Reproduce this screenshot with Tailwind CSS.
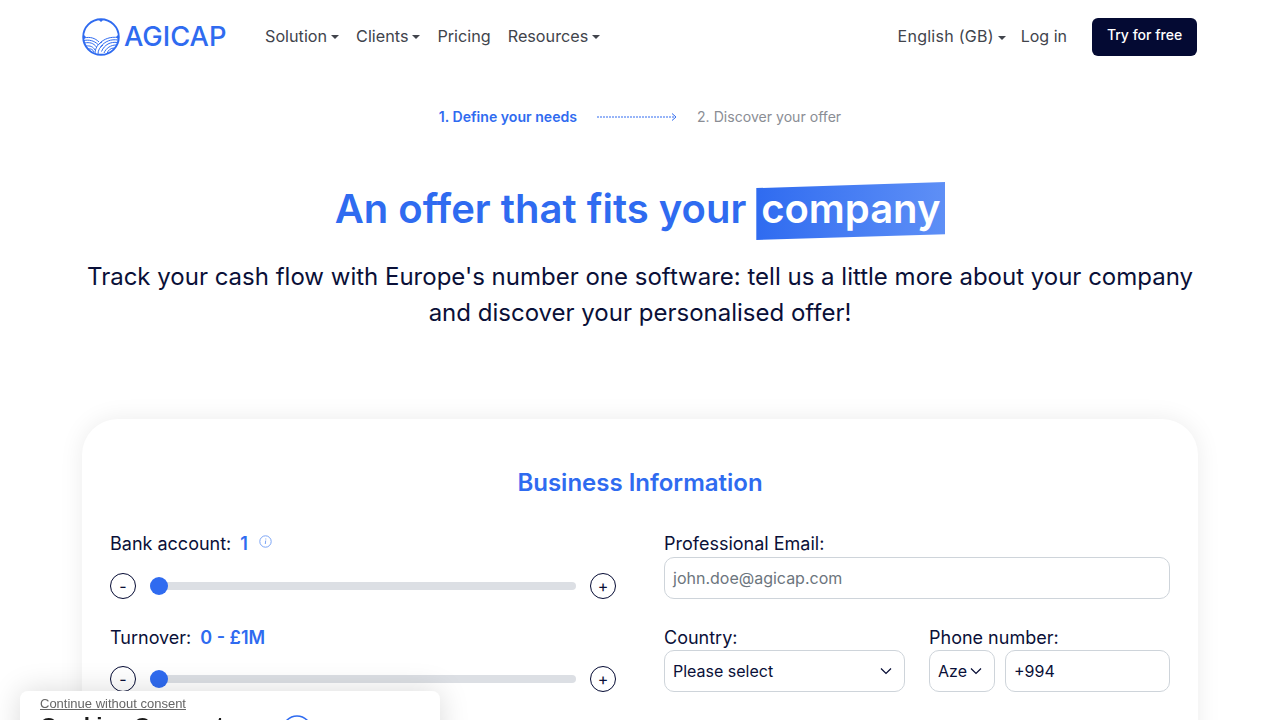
<!DOCTYPE html>
<html lang="en"><head><meta charset="utf-8"><title>Agicap</title>
<script src="https://cdn.jsdelivr.net/npm/@tailwindcss/browser@4"></script></head>
<body class="h-[720px] overflow-hidden bg-white font-['Inter',sans-serif] text-[#0a1038]">
<header class="flex h-[73px] items-center justify-between pl-[82px] pr-[83px]">
  <div class="flex items-center">
    <a class="flex w-[183px] items-center gap-[4px] text-[#2f6bf0]">
      <svg class="h-[38px] w-[38px]" viewBox="0 0 38 38" fill="none" stroke="#2f6bf0"><circle cx="19" cy="19" r="17.800" stroke-width="1.900"/><path fill="#2f6bf0" stroke="none" d="M16.500 1.500h5L19 4zM1.500 16.500v5L4 19zM36.500 16.500v5L34 19z"/><path stroke-width="1" d="M2 20c6-1.500 11 0 15 4M2 22.500c5-1 10 0 14 4M2.500 25c5-1 9 0 12 4M4 28c4-.5 7 .5 9 4M6 31c3-.5 5 .5 6 3M36 19.500c-7-1-14 1-19 6.500M36 22c-7-1-13 1-17.500 7M35.500 24.500c-7-1-13 2-16 9M34 27c-5 0-10 3-12 8M32 30c-3 0-6 2-7 5.500M13 36c0-6 3-10 7-12M16 36c0-4 2-7 5-9"/></svg>
      <span class="text-[27.300px] font-medium leading-none">AGICAP</span>
    </a>
    <nav class="flex items-center gap-[17px] pb-[1px] text-[16.200px] text-[#41444c]">
      <span class="flex items-center gap-[4px]">Solution<i class="mt-[3px] border-x-[4px] border-t-[4px] border-x-transparent border-t-[#41444c]"></i></span>
      <span class="flex items-center gap-[4px]">Clients<i class="mt-[3px] border-x-[4px] border-t-[4px] border-x-transparent border-t-[#41444c]"></i></span>
      <span>Pricing</span>
      <span class="flex items-center gap-[4px]">Resources<i class="mt-[3px] border-x-[4px] border-t-[4px] border-x-transparent border-t-[#41444c]"></i></span>
    </nav>
  </div>
  <div class="flex items-center text-[16px] text-[#41444c]">
    <span class="flex items-center gap-[4px] pb-[1px] tracking-[0.25px]">English (GB)<i class="mt-[3px] border-x-[4px] border-t-[4px] border-x-transparent border-t-[#41444c]"></i></span>
    <span class="ml-[15px] pb-[1px]">Log in</span>
    <a class="ml-[25px] flex h-[38px] w-[105px] items-center justify-center rounded-[6px] bg-[#040a33] pb-[4px] text-[14px] font-medium text-white">Try for free</a>
  </div>
</header>
<main>
  <div class="mt-[33px] flex h-[22px] items-center justify-center text-[14.100px]">
    <span class="font-semibold text-[#2f6bf0]">1. Define your needs</span>
    <svg class="mx-[20px] h-[10px] w-[80px]" viewBox="0 0 80 10" fill="none" stroke="#2f6bf0"><path stroke-dasharray="2 1" d="M0 5h78"/><path d="M75 1.500l4 3.500-4 3.500"/></svg>
    <span class="text-[#8a8d94]">2. Discover your offer</span>
  </div>
  <h1 class="mt-[51px] flex h-[60px] items-center justify-center text-[40px] font-semibold text-[#2f6bf0]">
    An offer that fits your
    <span class="relative mt-[4px] ml-[10px] inline-flex h-[58px] w-[189px] items-center justify-center pb-[4px]">
      <span class="absolute inset-0 bg-gradient-to-r from-[#2f6bf0] to-[#5e8ff6] [clip-path:polygon(0_10.500%,100%_0,100%_90%,0_100%)]"></span>
      <span class="relative text-white">company</span>
    </span>
  </h1>
  <p class="mx-auto mt-[20px] w-[1120px] text-center text-[24px] leading-[36px]">Track your cash flow with Europe's number one software: tell us a little more about your company and discover your personalised offer!</p>
  <section class="mx-[82px] mt-[88px] h-[400px] rounded-[36px] bg-white px-[28px] pt-[46px] shadow-[0_0_24px_rgba(0,0,0,0.08)]">
    <h2 class="text-center text-[24px] leading-[36px] font-semibold text-[#2f6bf0]">Business Information</h2>
    <div class="mt-[29px] grid grid-cols-[506px_506px] gap-x-[48px]">
      <div>
        <div class="flex h-[27px] items-center text-[18px]">Bank account:<b class="ml-[9px] font-semibold text-[#2f6bf0]">1</b>
          <svg class="mb-[4px] ml-[11px] h-[13px] w-[13px]" viewBox="0 0 13 13" fill="none" stroke="#7ba4f5"><circle cx="6.500" cy="6.500" r="5.700"/><path d="M6.700 5.500l-.4 3.500M6.800 3.500v1"/></svg>
        </div>
        <div class="mt-[16px] flex h-[26px] items-center">
          <span class="flex h-[26px] w-[26px] items-center justify-center rounded-full border border-[#040a33] text-[16px] leading-none">-</span>
          <div class="relative mx-[14px] h-[8px] w-[426px] rounded-full bg-[#dcdfe4]"><i class="absolute top-[-5px] left-0 h-[18px] w-[18px] rounded-full bg-[#2f6bf0]"></i></div>
          <span class="flex h-[26px] w-[26px] items-center justify-center rounded-full border border-[#040a33] text-[16px] leading-none">+</span>
        </div>
        <div class="mt-[25px] flex h-[27px] items-center text-[18px]">Turnover:<b class="ml-[9px] font-semibold text-[#2f6bf0]">0 - £1M</b></div>
        <div class="mt-[15px] flex h-[26px] items-center">
          <span class="flex h-[26px] w-[26px] items-center justify-center rounded-full border border-[#040a33] text-[16px] leading-none">-</span>
          <div class="relative mx-[14px] h-[8px] w-[426px] rounded-full bg-[#dcdfe4]"><i class="absolute top-[-5px] left-0 h-[18px] w-[18px] rounded-full bg-[#2f6bf0]"></i></div>
          <span class="flex h-[26px] w-[26px] items-center justify-center rounded-full border border-[#040a33] text-[16px] leading-none">+</span>
        </div>
      </div>
      <div>
        <label class="block h-[27px] text-[18px] leading-[27px]">Professional Email:</label>
        <div class="flex h-[42px] items-center rounded-[10px] border border-[#ced4da] px-[8px] text-[16px] text-[#6c757d]">john.doe@agicap.com</div>
        <div class="mt-[25px] flex gap-[24px]">
          <div class="w-[241px]">
            <label class="block h-[26px] text-[18px] leading-[27px]">Country:</label>
            <div class="flex h-[42px] items-center justify-between rounded-[10px] border border-[#ced4da] pr-[12px] pl-[8px] text-[16px]">Please select
              <svg class="h-[8px] w-[12px]" viewBox="0 0 12 8" fill="none" stroke="#040a33" stroke-width="1.200"><path d="M1 1.500l5 5 5-5"/></svg>
            </div>
          </div>
          <div class="w-[241px]">
            <label class="block h-[26px] text-[18px] leading-[27px]">Phone number:</label>
            <div class="flex gap-[10px]">
              <div class="flex h-[42px] w-[66px] items-center gap-[3px] rounded-[10px] border border-[#ced4da] pl-[8px] text-[16px]">Aze
                <svg class="h-[8px] w-[12px]" viewBox="0 0 12 8" fill="none" stroke="#040a33" stroke-width="1.200"><path d="M1 1.500l5 5 5-5"/></svg>
              </div>
              <div class="flex h-[42px] flex-1 items-center rounded-[10px] border border-[#ced4da] px-[8px] text-[16px]">+994</div>
            </div>
          </div>
        </div>
      </div>
    </div>
  </section>
</main>
<aside class="fixed top-[691px] left-[20px] h-[100px] w-[420px] rounded-[8px] bg-white px-[20px] shadow-[0_0_30px_rgba(0,0,0,0.15)]">
  <a class="block h-[21px] font-['Liberation_Sans',sans-serif] text-[13px] leading-[25px] text-[#666] underline">Continue without consent</a>
  <div class="flex items-start gap-[58px]">
    <span class="font-['Liberation_Sans',sans-serif] text-[22.500px] leading-[28px] font-bold text-[#1a1a1a]">Cookies Consent</span>
    <svg class="mt-[3px] h-[30px] w-[30px] shrink-0" viewBox="0 0 38 38" fill="none" stroke="#2f6bf0"><circle cx="19" cy="19" r="17.800" stroke-width="2"/></svg>
  </div>
</aside>
</body></html>
